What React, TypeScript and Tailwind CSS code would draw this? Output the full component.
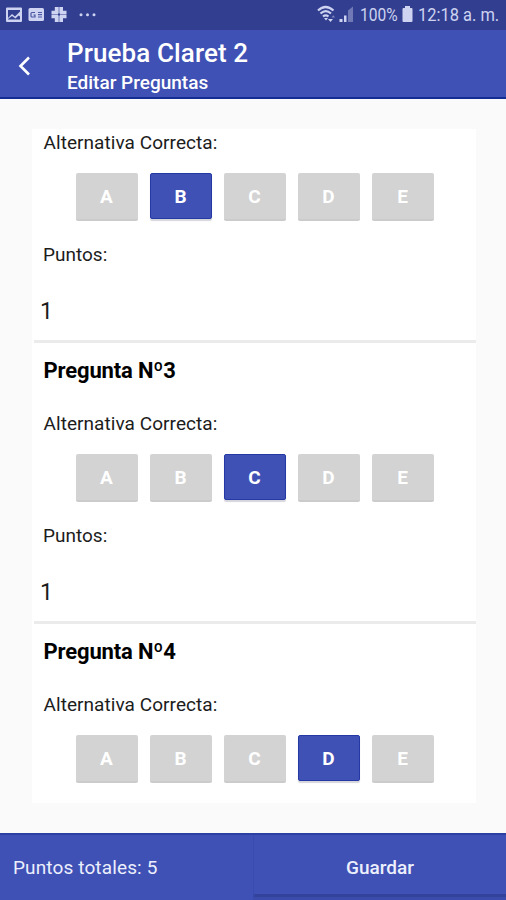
import clsx from 'clsx';

const LETTERS = ['A', 'B', 'C', 'D', 'E'];

type Question = { id: number; correct: string; points?: number; showTitle: boolean };

const questions: Question[] = [
  { id: 2, correct: 'B', points: 1, showTitle: false },
  { id: 3, correct: 'C', points: 1, showTitle: true },
  { id: 4, correct: 'D', showTitle: true },
];

const StatusBar = () => {
  return (
    <div className="h-[30px] shrink-0 bg-[#323f90] text-[#cdd3f0] flex justify-between items-center">
      <svg width="100" height="30" viewBox="0 0 100 30" fill="currentColor">
        <path
          fillRule="evenodd"
          d="M7 7.500h14q1 0 1 1v12.500q0 1-1 1H7q-1 0-1-1V8.500q0-1 1-1Zm1 2.500v8l4-4 3 2.500 5-5V10Zm0 9.500h12v-3l-1.500-1-3 3-3.500-2.500-4 3Z"
        />
        <rect x="28.500" y="8" width="15.500" height="13" rx="1.500" />
        <path
          d="M35 12.500h-3q-1 0-1 1v2.500q0 1 1 1h3v-2h-1.500M38 12.500h4M38 14.700h4M38 17h4"
          fill="none"
          stroke="#4b58a5"
          strokeWidth="1.200"
        />
        <path d="M54.800 7h3.900v6.500h-3.900zM59.300 7h3.700v6.500h-3.700zM54.800 15.500h3.900V22h-3.900zM59.300 15.500h3.700V22h-3.700zM51.500 10.800h6.500v3.400h-6.500zM60 10.800h6.500v3.400h-6.500zM51.500 14.800h6.500v3.400h-6.500zM60 14.800h6.500v3.400h-6.500z" />
        <circle cx="81" cy="14.700" r="1.500" />
        <circle cx="87.500" cy="14.700" r="1.500" />
        <circle cx="94" cy="14.700" r="1.500" />
      </svg>
      <div className="flex items-center w-[189px] h-full pt-px text-[17.5px]">
        <svg className="shrink-0" width="40" height="30" viewBox="0 0 40 30" fill="none" stroke="currentColor">
          <path d="M1 9.500q7.500-7 15.500 0M3.500 12.500q5.300-4.800 10.500 0M6 15.500q2.700-2.300 5.500 0" strokeWidth="2.200" />
          <path d="M7 17l2 2.500 2-2.500zM11 18h5l-2.500 3z" fill="currentColor" stroke="none" />
          <path d="M14.500 16.500h3.500l-1.700-2.200z" fill="currentColor" stroke="none" opacity=".5" />
          <path d="M22.500 18h3v3h-3zM27 14.500h2.500v6.500h-2.500z" fill="currentColor" stroke="none" />
          <path d="M31 9.500l5-4v15.500h-5z" fill="currentColor" stroke="none" opacity=".4" />
        </svg>
        <div className="w-[42px] ml-[3px] shrink-0">
          <span className="inline-block origin-left scale-x-[0.89]">100%</span>
        </div>
        <svg className="shrink-0" width="11" height="30" viewBox="0 0 11 30" fill="currentColor">
          <path d="M3 5h5v2h1.500q1 0 1 1v12q0 1-1 1h-8q-1 0-1-1V8q0-1 1-1H3z" />
        </svg>
        <div className="w-[88px] ml-[5px] shrink-0 whitespace-nowrap">
          <span className="inline-block origin-left scale-x-[0.94]">12:18 a. m.</span>
        </div>
      </div>
    </div>
  );
};

const Header = () => {
  return (
    <div className="h-[69px] shrink-0 bg-[#3f51b5] border-b-2 border-[#142d95] text-white flex">
      <button className="w-[67px] pl-[17px] pt-[5px] flex items-center">
        <svg width="14" height="20" viewBox="0 0 14 20" fill="none" stroke="currentColor" strokeWidth="2.600">
          <path d="M12 1.500L3.500 10l8.500 8.500" />
        </svg>
      </button>
      <div className="flex flex-col pt-[7px] font-medium whitespace-nowrap">
        <p className="text-[26px] leading-[32px] tracking-[0.1px]">Prueba Claret 2</p>
        <p className="text-[19px] leading-[28px]">Editar Preguntas</p>
      </div>
    </div>
  );
};

type OptionProps = { letter: string; selected: boolean };
const Option = ({ letter, selected }: OptionProps) => {
  return (
    <button
      className={clsx(
        'w-[62px] rounded-xs text-white text-[19px] font-bold flex justify-center items-center',
        selected
          ? 'h-[46px] pt-[3px] bg-[#3f51b5] border border-[#2539a4] shadow-[0_2px_1px_#d5d5dc]'
          : 'h-12 pt-[3px] bg-[#d3d3d3] border-b-2 border-[#cbcbcb]',
      )}
    >
      {letter}
    </button>
  );
};

const QuestionItem = ({ id, correct, points, showTitle }: Question) => {
  return (
    <div className="text-[19px] text-[#1c1c1c]">
      {showTitle && (
        <p className="h-[54px] pl-[11.5px] flex items-center text-[22px] font-bold tracking-[-0.15px] text-black">
          Pregunta Nº{id}
        </p>
      )}
      <p className="h-[52px] pl-[11.5px] pt-0.5 flex items-center tracking-[0.06px]">Alternativa Correcta:</p>
      <div className="h-12 mt-[5px] ml-[43.5px] flex gap-3">
        {LETTERS.map((letter) => (
          <Option key={letter} letter={letter} selected={letter === correct} />
        ))}
      </div>
      {points !== undefined && (
        <>
          <p className="h-[66px] pl-[11px] pt-0.5 flex items-center">Puntos:</p>
          <p className="h-[47px] pl-2 pt-[3px] flex items-center text-[23px]">{points}</p>
          <div className="h-[3px] mt-1.5 ml-0.5 bg-[#ebebeb]" />
        </>
      )}
    </div>
  );
};

const Footer = () => {
  return (
    <div className="h-[67px] shrink-0 bg-[#3f51b5] border-t-2 border-[#2c3fa3] text-[#eceffc] text-[19px] flex">
      <div className="w-[253px] pl-[13px] pt-0.5 flex items-center tracking-[0.13px]">Puntos totales: 5</div>
      <div className="flex-1 border-l border-[#394baf] flex flex-col">
        <button className="flex-1 pt-2 font-medium">Guardar</button>
        <div className="h-[3px] bg-[#33439b]" />
        <div className="h-[3px] bg-[#3a4bab]" />
      </div>
    </div>
  );
};

const App = () => {
  return (
    <div className="w-[506px] h-[900px] overflow-hidden flex flex-col bg-[#fafafa] font-[Roboto,sans-serif]">
      <StatusBar />
      <Header />
      <div className="flex-1 min-h-0 pt-[30px] pb-[30px] pl-8 pr-[30px]">
        <div className="h-full overflow-hidden bg-white">
          <div className="-mt-[13px]">
            {questions.map((q) => (
              <QuestionItem key={q.id} {...q} />
            ))}
          </div>
        </div>
      </div>
      <Footer />
    </div>
  );
};

export default App;
